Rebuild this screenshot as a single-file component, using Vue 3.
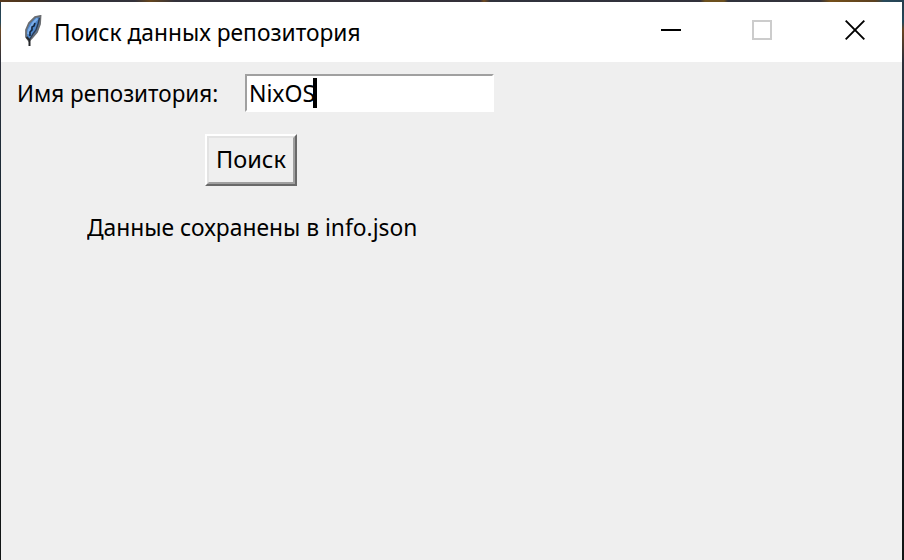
<script setup>
import { ref } from 'vue'

const title = 'Поиск данных репозитория'
const repository = ref('NixOS')
const status = 'Данные сохранены в info.json'
</script>

<template>
  <div class="desktop">
    <main class="window">
      <header class="titlebar">
        <svg class="feather" width="18" height="32" viewBox="0 0 18 32">
          <path d="M16.5 1 L11 2 L5 8 L2 15 L2 22 L5 26 L8 23 L13 17 L16 9 Z" fill="#4e86ca" stroke="#6b6e72" stroke-width="1.8" />
          <path d="M13.5 3.5 L9 8 L5 15 L4 19" fill="none" stroke="#7fb0ea" stroke-width="2" />
          <path d="M15.5 3 L14 9 L12 15 L9 19 L6 24" fill="none" stroke="#2d3d52" stroke-width="1.4" />
          <path d="M11 8 L10 11 L8 12 L8 15 L6 17 L6 21" fill="none" stroke="#14263d" stroke-width="1.6" />
          <path d="M2.5 22 L5.5 25 L5.5 31" fill="none" stroke="#25272a" stroke-width="2" />
        </svg>
        <h1 class="title">{{ title }}</h1>
        <div class="controls">
          <svg width="20" height="20" viewBox="0 0 20 20"><path d="M0 10H20" stroke="#000" stroke-width="2" /></svg>
          <svg width="20" height="20" viewBox="0 0 20 20"><rect x="1" y="1" width="18" height="18" fill="none" stroke="#ccc" stroke-width="2" /></svg>
          <svg width="20" height="20" viewBox="0 0 20 20"><path d="M.7 .7L19.3 19.3M19.3 .7L.7 19.3" stroke="#000" stroke-width="1.9" /></svg>
        </div>
      </header>
      <section class="content">
        <div class="field">
          <label class="label"><span>Имя репозитория:</span></label>
          <div class="entry"><span class="value">{{ repository }}</span><i class="caret"></i></div>
        </div>
        <button class="search"><span class="face"><span class="caption">Поиск</span></span></button>
        <p class="status">{{ status }}</p>
      </section>
    </main>
  </div>
</template>

<style>
body { margin: 0; overflow: hidden; }
</style>

<style scoped>
.desktop {
  box-sizing: border-box;
  width: 904px;
  height: 560px;
  padding: 2px 2px 0 1px;
  background:
    linear-gradient(90deg, #59391c 0, #49341f 30px, #30303a 55px, #33323a 135px, #65451d 150px, #33323b 175px, #343039 480px, #704a1e 484px, #30323c 490px, #31313b 700px, #6c501e 705px, #6c501e 724px, #30323c 728px, #33323b 820px, #755019 830px, #5b4020 875px, #28495a 884px, #254253 904px) top / 904px 2px no-repeat,
    linear-gradient(#263947 0, #24485a 22px, #694523 30px, #2d303a 60px, #1e2c38 150px, #10151b 350px, #111514 560px);
}
.window {
  height: 558px;
  background: #efefef;
  color: #000;
  font-family: "Noto Sans", "Open Sans", sans-serif;
}
.titlebar {
  display: flex;
  align-items: flex-start;
  height: 60px;
  background: #fff;
}
.feather { margin: 13px 0 0 23px; flex: none; }
.title {
  margin: 13px 0 0 12px;
  font-size: 24px;
  line-height: 34px;
  font-weight: 400;
  white-space: nowrap;
  transform-origin: left;
  transform: scaleX(.948);
}
.controls { display: flex; gap: 72px; margin: 18px 37px 0 auto; }
.controls svg { flex: none; }
.controls svg:nth-child(2) { margin-right: 1px; margin-left: -1px; }
.field { display: flex; padding: 12px 0 0 16px; }
.label {
  width: 228px;
  font-size: 24px;
  line-height: 38px;
  white-space: nowrap;
}
.label span { display: inline-block; transform-origin: left; transform: scaleX(.937); }
.entry {
  display: flex;
  box-sizing: border-box;
  width: 249px;
  height: 38px;
  border: 2px solid #fff;
  border-top-color: #a0a0a0;
  border-left-color: #a0a0a0;
  background: #fff;
}
.value {
  width: 66px;
  padding-left: 2px;
  font-size: 24px;
  line-height: 34px;
  box-sizing: border-box;
  transform-origin: left;
  transform: scaleX(.96);
}
.caret { width: 4px; height: 30px; margin-top: 2px; background: #000; position: relative; }
.search {
  display: block;
  width: 92px;
  height: 52px;
  margin: 22px 0 0 204px;
  padding: 0;
  border: 2px solid #fff;
  border-right-color: #696969;
  border-bottom-color: #696969;
  background: #efefef;
  color: #000;
  font: 24px/42px "Noto Sans", "Open Sans", sans-serif;
}
.face {
  display: block;
  box-sizing: border-box;
  height: 48px;
  border: 2px solid #e3e3e3;
  border-right-color: #a0a0a0;
  border-bottom-color: #a0a0a0;
}
.caption { display: block; transform: scaleX(.98); }
.status {
  margin: 24px 0 0 86px;
  font-size: 24px;
  line-height: 34px;
  white-space: nowrap;
  transform-origin: left;
  transform: scaleX(.95);
}
</style>
